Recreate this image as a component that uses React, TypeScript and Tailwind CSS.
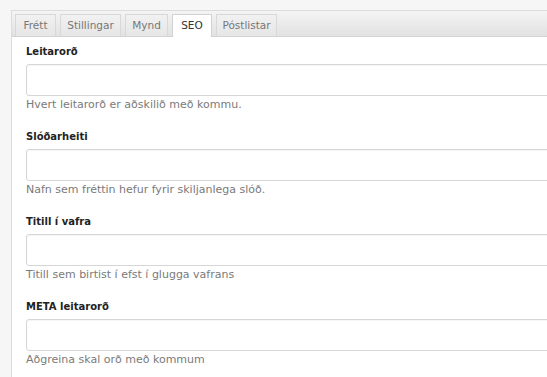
import React from "react";

const tabs = [
  { t: "Frétt", w: "w-[41px]" },
  { t: "Stillingar", w: "w-[61px]" },
  { t: "Mynd", w: "w-[43px]" },
  { t: "SEO", w: "w-[40px]" },
  { t: "Póstlistar", w: "w-[61px]" },
];

const fields = [
  { label: "Leitarorð", help: "Hvert leitarorð er aðskilið með kommu." },
  { label: "Slóðarheiti", help: "Nafn sem fréttin hefur fyrir skiljanlega slóð." },
  { label: "Titill í vafra", help: "Titill sem birtist í efst í glugga vafrans" },
  { label: "META leitarorð", help: "Aðgreina skal orð með kommum" },
];

export default function App() {
  return (
    <div
      className="w-[547px] h-[377px] overflow-hidden bg-[#f6f6f6] pt-[10px] pl-[11px]"
      style={{ fontFamily: '"DejaVu Sans", Verdana, sans-serif' }}
    >
      <div className="border-l border-t border-[#dcdcdc] bg-white h-full">
        <div className="h-[26px] bg-gradient-to-b from-[#f4f4f4] to-[#e2e2e2] border-b border-[#d2d2d2] flex items-end pl-[3px] gap-[4px]">
          {tabs.map(({ t, w }) => {
            const active = t === "SEO";
            return (
              <div
                key={t}
                className={
                  active
                    ? `${w} h-[23px] -mb-px flex items-center justify-center bg-white border border-b-0 border-[#d2d2d2] text-[10.5px] text-[#333]`
                    : `${w} h-[22px] flex items-center justify-center bg-gradient-to-b from-[#f1f1f1] to-[#e6e6e6] border border-b-0 border-[#d8d8d8] text-[10.5px] text-[#777]`
                }
              >
                {t}
              </div>
            );
          })}
        </div>
        <div className="pt-[8px] pl-[14px]">
          {fields.map((f) => (
            <div key={f.label} className="mb-[17px]">
              <div className="text-[10px] leading-[14px] font-bold text-[#222]">{f.label}</div>
              <div className="mt-[5px] h-[32px] w-[540px] border border-[#d6d6d6] rounded-[3px] bg-white shadow-[inset_0_1px_1px_rgba(0,0,0,0.04)]" />
              <div className="mt-[1px] text-[11px] leading-[16px] text-[#7a7a7a]">{f.help}</div>
            </div>
          ))}
        </div>
      </div>
    </div>
  );
}
